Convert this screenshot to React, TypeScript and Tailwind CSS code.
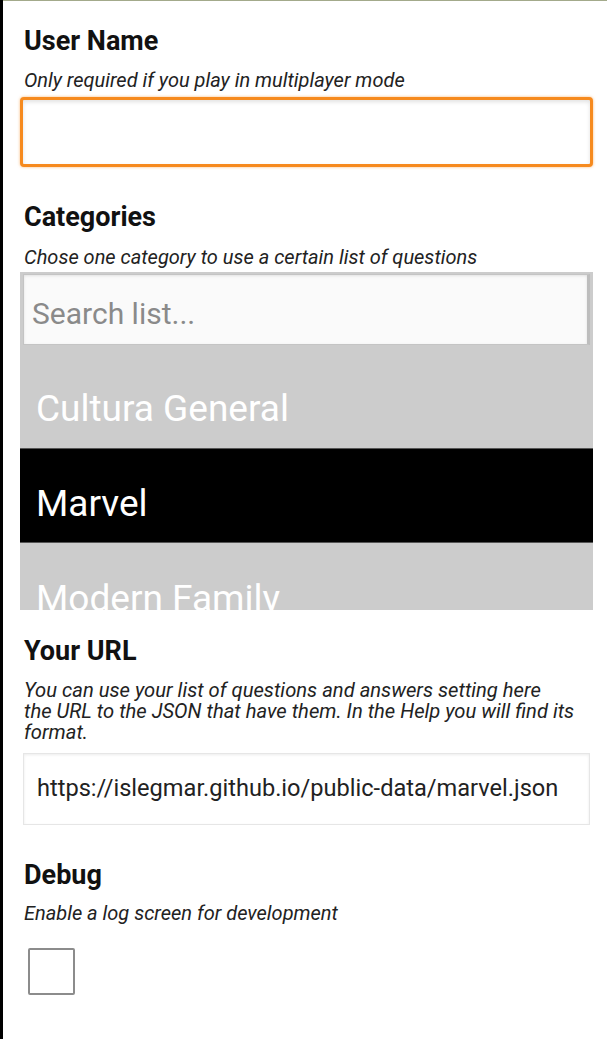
import React from 'react'

const font = { fontFamily: 'Roboto, "Noto Sans", sans-serif' }

function Title({ children, className = '' }: { children: React.ReactNode; className?: string }) {
  return <div className={`text-[27px] leading-[28px] font-bold text-[#111] ${className}`}>{children}</div>
}

function Hint({ children, className = '' }: { children: React.ReactNode; className?: string }) {
  return <div className={`text-[20px] leading-[22px] italic text-[#222] ${className}`}>{children}</div>
}

const categories = ['Cultura General', 'Marvel', 'Modern Family']

export default function App() {
  const selected = 'Marvel'
  return (
    <div className="flex min-h-[1039px] w-[607px] bg-white" style={font}>
      <div className="w-[3px] shrink-0 bg-black" />
      <div className="flex-1 flex flex-col">
        <div className="h-px bg-[#a3aa8b]" />
        <div className="flex flex-col pl-[17px] pr-[14px]">
          {/* user name */}
          <Title className="mt-[26px] ml-[4px]">User Name</Title>
          <Hint className="mt-[14px] ml-[4px]">Only required if you play in multiplayer mode</Hint>
          <div className="mt-[6px] h-[70px] rounded-[4px] border-[3px] border-[#f68a1e] bg-white shadow-[inset_0_2px_4px_rgba(0,0,0,0.12),0_0_3px_rgba(246,138,30,0.6)]" />

          {/* categories */}
          <Title className="mt-[36px] ml-[4px]">Categories</Title>
          <Hint className="mt-[15px] ml-[4px]">Chose one category to use a certain list of questions</Hint>
          <div className="mt-[4px] h-[338px] overflow-hidden bg-[#cccccc] flex flex-col">
            <div className="mx-[3px] mt-[2px] h-[71px] shrink-0 flex items-center border border-[#c4c4c4] border-r-[3px] border-r-[#bdbdbd] bg-[#fafafa] shadow-[inset_0_1px_3px_rgba(0,0,0,0.1)] px-[8px] pt-[8px]">
              <span className="text-[30px] leading-[36px] text-[#8a8a8a]">Search list...</span>
            </div>
            <div className="h-[8px] shrink-0" />
            {categories.map((c) => (
              <div
                key={c}
                className={`h-[95px] shrink-0 flex items-center px-[16px] pt-[16px] text-[37px] leading-[44px] ${
                  c === selected ? 'bg-black text-white border-y border-[#555]' : 'text-white'
                }`}
              >
                {c}
              </div>
            ))}
          </div>

          {/* url */}
          <Title className="mt-[27px] ml-[4px]">Your URL</Title>
          <div className="mt-[15px] ml-[4px] text-[20.2px] leading-[21px] italic text-[#222]">
            You can use your list of questions and answers setting here
            <br />
            the URL to the JSON that have them. In the Help you will find its
            <br />
            format.
          </div>
          <div className="mt-[10px] mx-[3px] h-[72px] flex items-center border border-[#e6e6e6] bg-white shadow-[inset_0_1px_3px_rgba(0,0,0,0.08)] px-[13px]">
            <span className="text-[23.6px] text-[#222]">https://islegmar.github.io/public-data/marvel.json</span>
          </div>

          {/* debug */}
          <Title className="mt-[36px] ml-[4px]">Debug</Title>
          <Hint className="mt-[13px] ml-[4px]">Enable a log screen for development</Hint>
          <div className="mt-[24px] ml-[8px] w-[47px] h-[47px] rounded-[2px] border-2 border-[#8c8c8c] bg-white" />
        </div>
      </div>
    </div>
  )
}
